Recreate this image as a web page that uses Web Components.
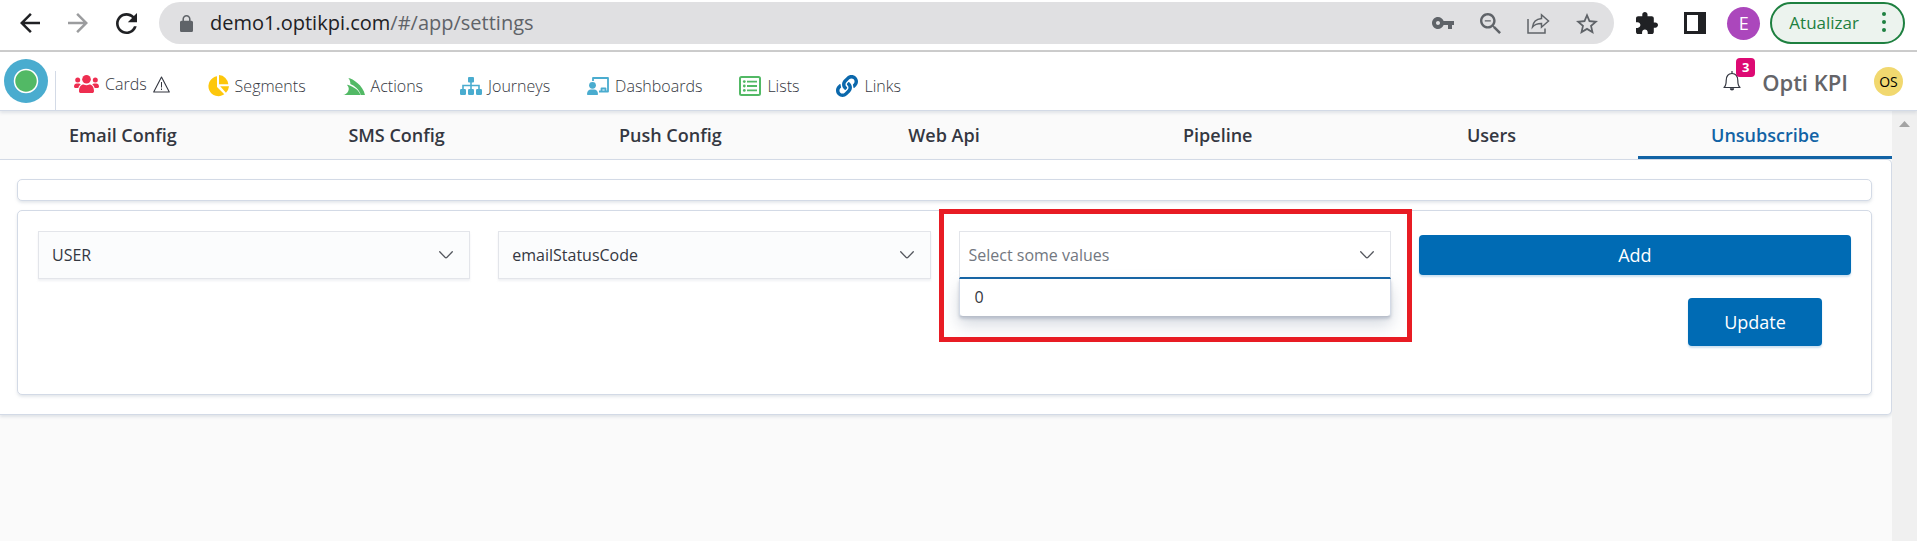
<!DOCTYPE html>
<html lang="en">
<head>
<meta charset="utf-8">
<title>Settings - Unsubscribe</title>
<style>
  body { margin: 0; background: #fafafa; color: #343741; font-family: "Open Sans", "Noto Sans", sans-serif; font-size: 16px; }
</style>
</head>
<body>
<settings-page></settings-page>
<script>
const ICONS = {
  back: [20, 20, '4 4 16 16', '<path d="M20 11H7.83l5.59-5.59L12 4l-8 8 8 8 1.41-1.41L7.83 13H20v-2z"/>'],
  forward: [20, 20, '4 4 16 16', '<path d="M12 4l-1.41 1.41L16.17 11H4v2h12.17l-5.58 5.59L12 20l8-8z"/>'],
  reload: [21, 21, '4 4 16 16', '<path d="M17.65 6.35C16.2 4.9 14.21 4 12 4c-4.42 0-7.99 3.58-7.99 8s3.57 8 7.99 8c3.73 0 6.84-2.55 7.73-6h-2.08c-.82 2.33-3.04 4-5.65 4-3.31 0-6-2.69-6-6s2.69-6 6-6c1.66 0 3.14.69 4.22 1.78L13 11h7V4l-2.35 2.35z"/>'],
  lock: [13, 17, '4 1 16 21', '<path d="M18 8h-1V6c0-2.76-2.24-5-5-5S7 3.24 7 6v2H6c-1.1 0-2 .9-2 2v10c0 1.1.9 2 2 2h12c1.1 0 2-.9 2-2V10c0-1.1-.9-2-2-2zM15.1 8H8.9V6c0-1.71 1.39-3.1 3.1-3.1s3.1 1.39 3.1 3.1v2z"/>'],
  key: [22, 12, '1 6 22 12', '<path d="M12.65 10C11.83 7.67 9.61 6 7 6c-3.31 0-6 2.69-6 6s2.69 6 6 6c2.61 0 4.83-1.67 5.65-4H17v4h4v-4h2v-4H12.65zM7 14c-1.1 0-2-.9-2-2s.9-2 2-2 2 .9 2 2-.9 2-2 2z"/>'],
  zoomout: [21, 21, '3 3 17.5 17.5', '<path d="M15.5 14h-.79l-.28-.27C15.41 12.59 16 11.11 16 9.5 16 5.91 13.09 3 9.5 3S3 5.91 3 9.5 5.91 16 9.5 16c1.61 0 3.09-.59 4.23-1.57l.27.28v.79l5 4.99L20.49 19l-4.99-5zm-6 0C7.01 14 5 11.99 5 9.5S7.01 5 9.5 5 14 7.01 14 9.5 11.99 14 9.5 14zM7 9h5v1H7z"/>'],
  share: [23, 21, '0 0 23 21', '<g fill="none" stroke="currentColor" stroke-width="1.5" stroke-linejoin="miter"><path d="M1 6v14H18v-4.500"/><path d="M14.500 1.800 21.500 8l-7 6.200v-3.700c-4.500 0-7 1-9 3.500 .5-4.500 3.500-7.900 9-8.500z"/></g>'],
  star: [22, 21, '2 2 20 19', '<path d="M22 9.240l-7.190-.62L12 2 9.190 8.630 2 9.240l5.460 4.730L5.820 21 12 17.270 18.180 21l-1.630-7.030L22 9.240zM12 15.400l-3.760 2.270 1-4.280-3.320-2.880 4.380-.38L12 6.100l1.710 4.040 4.380.38-3.320 2.880 1 4.280L12 15.400z"/>'],
  puzzle: [22, 22, '2 1 21 21', '<path d="M20.5 11H19V7c0-1.100-.9-2-2-2h-4V3.500C13 2.120 11.880 1 10.500 1S8 2.120 8 3.500V5H4c-1.100 0-1.990.9-1.990 2v3.800H3.500c1.490 0 2.700 1.210 2.700 2.700s-1.210 2.700-2.700 2.700H2V20c0 1.100.9 2 2 2h3.800v-1.500c0-1.490 1.210-2.700 2.700-2.700 1.490 0 2.700 1.210 2.700 2.700V22H17c1.100 0 2-.9 2-2v-4h1.500c1.380 0 2.500-1.120 2.500-2.500S21.880 11 20.500 11z"/>'],
  sidepanel: [22, 22, '0 0 22 22', '<path fill-rule="evenodd" d="M0 0h22v22H0zM3 3v16h11V3z"/>'],
  dots: [4, 20, '0 0 4 20', '<circle cx="2" cy="2" r="2"/><circle cx="2" cy="10" r="2"/><circle cx="2" cy="18" r="2"/>'],
  logo: [44, 44, '0 0 44 44', '<circle cx="22" cy="22" r="22" fill="#4aaccf"/><circle cx="22" cy="22" r="11.500" fill="#52b965" stroke="#fff" stroke-width="1.500"/>'],
  users: [25, 18, '0 0 25 18', '<circle cx="12.500" cy="4.300" r="4.300"/><circle cx="3.700" cy="5" r="2.500"/><circle cx="21.300" cy="5" r="2.500"/><path d="M5 16.200c0-4 2-6.600 4.600-6.600 2 .8 3.800.8 5.800 0 2.600 0 4.600 2.600 4.600 6.600 0 1-.8 1.800-1.800 1.800H6.800C5.800 18 5 17.200 5 16.200zM0 11.600C0 9.700 1.200 8.600 2.700 8.600h2c.8 0 1.500.3 2 .8-1.300.9-2 2-2.400 3.500H1.200C.5 12.900 0 12.300 0 11.600zM25 11.600c0-1.900-1.200-3-2.700-3h-2c-.8 0-1.500.3-2 .8 1.300.9 2 2 2.400 3.500h3.100c.7 0 1.200-.6 1.200-1.300z"/>'],
  warning: [17, 17, '0 0 17 17', '<path d="M8.500 1 16.300 16H.7z" fill="none" stroke="currentColor" stroke-width="1.100" stroke-linejoin="round"/><path d="M8 6h1v5.500H8zM8 12.500h1v1.400H8z"/>'],
  pie: [22, 22, '0 0 22 22', '<path d="M10 1.300V12l7.300 7.300A10 10 0 1 1 10 1.300z"/><path d="M12 0a10 10 0 0 1 9.300 9.300H12z"/><path d="M13.200 11.300H22a10 10 0 0 1-3.100 6.500z"/>'],
  actions: [22, 17, '0 64 496 384', '<path d="M88 216c81.700 10.200 273.700 102.300 304 232H0c99.500-8.100 184.500-137 88-232zm32-152c32.300 35.600 47.700 83.900 46.400 133.600C249.300 231.300 373.700 321.300 400 448h96C455.300 231.900 222.800 79.500 120 64z"/>'],
  sitemap: [22, 18, '0 0 22 18', '<rect x="8" width="6" height="5.500" rx="1"/><rect y="12" width="6" height="6" rx="1.200"/><rect x="8" y="12" width="6" height="6" rx="1.200"/><rect x="16" y="12" width="6" height="6" rx="1.200"/><path d="M3 12V8.500h16V12M11 5v7" fill="none" stroke="currentColor" stroke-width="1.600"/>'],
  board: [22, 18, '0 0 22 18', '<circle cx="5.500" cy="8.300" r="3.400"/><path d="M0 17.200c0-2.800 1.600-4.600 4-4.600h3c2.400 0 4 1.800 4 4.600 0 .5-.3.8-.8.8H.8c-.5 0-.8-.3-.8-.8z"/><path d="M6 4V1h15v13.500h-9M14.500 14v-2.500h4V14" fill="none" stroke="currentColor" stroke-width="1.800" stroke-linejoin="round"/>'],
  list: [22, 20, '0 0 22 20', '<rect x="1" y="1" width="20" height="18" rx="1.500" fill="none" stroke="currentColor" stroke-width="2"/><path d="M8 4.700h10v1.800H8zM8 9.100h10v1.800H8zM8 13.500h10v1.800H8z"/><circle cx="5.300" cy="5.600" r="1.400"/><circle cx="5.300" cy="10" r="1.400"/><circle cx="5.300" cy="14.400" r="1.400"/>'],
  link: [22, 22, '0 0 512 512', '<path d="M326.612 185.391c59.747 59.809 58.927 155.698.36 214.590-.11.12-.24.25-.36.37l-67.200 67.200c-59.270 59.270-155.699 59.262-214.960 0-59.270-59.260-59.270-155.700 0-214.960l37.106-37.106c9.840-9.840 26.786-3.300 27.294 10.606.648 17.722 3.826 35.527 9.690 52.721 1.986 5.822.567 12.262-3.783 16.612l-13.087 13.087c-28.026 28.026-28.905 73.660-1.155 101.960 28.024 28.579 74.086 28.749 102.325.51l67.200-67.190c28.191-28.191 28.073-73.757 0-101.830-3.701-3.694-7.429-6.564-10.341-8.569a16.037 16.037 0 0 1-6.947-12.606c-.396-10.567 3.348-21.456 11.698-29.806l21.054-21.055c5.521-5.521 14.182-6.199 20.584-1.731a152.482 152.482 0 0 1 20.522 17.197zM467.547 44.449c-59.261-59.262-155.690-59.270-214.960 0l-67.200 67.200c-.12.12-.25.25-.36.37-58.566 58.892-59.387 154.781.36 214.590a152.454 152.454 0 0 0 20.521 17.196c6.402 4.468 15.064 3.789 20.584-1.731l21.054-21.055c8.350-8.350 12.094-19.239 11.698-29.806a16.037 16.037 0 0 0-6.947-12.606c-2.912-2.005-6.640-4.875-10.341-8.569-28.073-28.073-28.191-73.639 0-101.830l67.200-67.190c28.239-28.239 74.300-28.069 102.325.51 27.750 28.300 26.872 73.934-1.155 101.960l-13.087 13.087c-4.350 4.350-5.769 10.790-3.783 16.612 5.864 17.194 9.042 34.999 9.690 52.721.509 13.906 17.454 20.446 27.294 10.606l37.106-37.106c59.271-59.259 59.271-155.699.001-214.959z"/>'],
  bell: [18, 20, '0 0 18 20', '<path d="M1 16.500c1.800-1.600 2.200-3.500 2.200-7C3.200 5 5.300 2.500 9 2.500s5.800 2.500 5.800 7c0 3.500.4 5.400 2.200 7z" fill="none" stroke="currentColor" stroke-width="1.200" stroke-linejoin="round"/><path d="M8.400 0h1.200v2.500H8.400zM6.800 17.300h4.400a2.200 2.200 0 0 1-4.400 0z"/>'],
  chevron: [14, 8, '0 0 14 8', '<path d="M.7.7 6 6.300q1 1 2 0L13.300.7" fill="none" stroke="currentColor" stroke-width="1.300" stroke-linecap="round"/>'],
  scrollup: [11, 6, '0 0 11 6', '<path d="M5.500 0 11 6H0z"/>']
};

function define(name, markup, setup) {
  const template = document.createElement('template');
  template.innerHTML = markup;
  customElements.define(name, class extends HTMLElement {
    connectedCallback() {
      if (this.shadowRoot) return;
      this.attachShadow({ mode: 'open' }).append(template.content.cloneNode(true));
      if (setup) setup(this, this.shadowRoot);
    }
  });
}

define('ui-icon', `<style>:host{display:block;flex:none} svg{display:block;fill:currentColor}</style>`, (el, root) => {
  const [w, h, box, body] = ICONS[el.getAttribute('name')];
  root.innerHTML += `<svg width="${w}" height="${h}" viewBox="${box}" preserveAspectRatio="none" aria-hidden="true">${body}</svg>`;
});

define('icon-button', `<style>
  :host{display:block;flex:none}
  button{display:flex;align-items:center;justify-content:center;border:0;padding:0;background:none;color:inherit;font:inherit}
</style><button type="button"><slot></slot></button>`, (el, root) => {
  root.querySelector('button').setAttribute('aria-label', el.getAttribute('label'));
});

define('browser-bar', `<style>
  :host{display:flex;align-items:center;height:46px;padding:0 12px 4px 20px;border-bottom:2px solid #ccc;background:#fff;color:#202124}
  .nav{display:flex;align-items:center;gap:28px;margin-right:22px}
  .off{color:#9b9c9e}
  .omnibox{flex:1;display:flex;align-items:center;height:42px;box-sizing:border-box;padding:0 16px 0 21px;border-radius:21px;background:#e0e0e2;color:#5f6368}
  .url{flex:1;margin-left:17px;font-size:20px;line-height:24px;white-space:nowrap}
  .url b{font-weight:400;color:#202124}
  .tools{display:flex;align-items:center;gap:26px}
  .ext{display:flex;align-items:center;gap:26px;margin:0 21px 0 22px}
  .right{display:flex;align-items:center}
  .who{width:33px;height:33px;border-radius:50%;background:#ab47bc;color:#fff;font-size:18px;display:flex;align-items:center;justify-content:center;margin-right:10px}
  .update{display:flex;align-items:center;gap:23px;box-sizing:border-box;height:42px;padding:0 17px 2px;border:2px solid #1e8040;border-radius:21px;background:#ecf3ee;color:#1e8040;font:17px "Open Sans",sans-serif}
</style>
<div class="nav">
  <icon-button label="Back"><ui-icon name="back"></ui-icon></icon-button>
  <icon-button label="Forward" class="off"><ui-icon name="forward"></ui-icon></icon-button>
  <icon-button label="Reload"><ui-icon name="reload"></ui-icon></icon-button>
</div>
<div class="omnibox">
  <ui-icon name="lock"></ui-icon>
  <span class="url"><b>demo1.optikpi.com</b>/#/app/settings</span>
  <div class="tools">
    <icon-button label="Passwords"><ui-icon name="key"></ui-icon></icon-button>
    <icon-button label="Zoom"><ui-icon name="zoomout"></ui-icon></icon-button>
    <icon-button label="Share"><ui-icon name="share"></ui-icon></icon-button>
    <icon-button label="Bookmark"><ui-icon name="star"></ui-icon></icon-button>
  </div>
</div>
<div class="ext">
  <icon-button label="Extensions"><ui-icon name="puzzle"></ui-icon></icon-button>
  <icon-button label="Side panel"><ui-icon name="sidepanel"></ui-icon></icon-button>
</div>
<div class="right">
  <div class="who">E</div>
  <button class="update" type="button">Atualizar<ui-icon name="dots"></ui-icon></button>
</div>`);

define('nav-item', `<style>
  :host{display:block;flex:none}
  a{display:flex;align-items:center;gap:6px;color:#343741;text-decoration:none;font-size:16px;line-height:24px;font-weight:300;white-space:nowrap}
  a > ui-icon{color:var(--tint)}
</style><a href="#/app"><slot></slot></a>`, (el, root) => {
  const icon = document.createElement('ui-icon');
  icon.setAttribute('name', el.getAttribute('icon'));
  root.querySelector('a').prepend(icon);
});

define('app-header', `<style>
  :host{display:flex;align-items:center;height:58px;padding:0 14px 0 4px;background:#fff;border-bottom:1px solid #d3dae6;box-shadow:0 2px 3px #98a2b340;position:relative}
  .rule{align-self:flex-end;width:1px;height:39px;margin:0 18px 0 7px;background:#d3dae6}
  nav{flex:1;display:flex;align-items:center;gap:37px;padding-top:10px}
  nav > :first-child{margin-bottom:4px}
  .bell{position:relative;margin-right:21px;color:#343741}
  .badge{position:absolute;left:13px;top:-13px;width:19px;height:19px;border-radius:4px;background:#dd0a73;color:#fff;font-size:13px;line-height:19px;font-weight:700;text-align:center}
  .name{font-size:22px;line-height:30px;font-weight:600;color:#646469;margin:2px 26px 0 0;white-space:nowrap}
  .who{width:29px;height:29px;border-radius:50%;background:#f1d86f;color:#000;font-size:14px;line-height:29px;text-align:center}
</style>
<ui-icon name="logo"></ui-icon>
<span class="rule"></span>
<nav>
  <nav-item icon="users" style="--tint:#ee2e50">Cards <ui-icon name="warning"></ui-icon></nav-item>
  <nav-item icon="pie" style="--tint:#fdc70c">Segments</nav-item>
  <nav-item icon="actions" style="--tint:#52b965">Actions</nav-item>
  <nav-item icon="sitemap" style="--tint:#4aaccf">Journeys</nav-item>
  <nav-item icon="board" style="--tint:#4aaccf">Dashboards</nav-item>
  <nav-item icon="list" style="--tint:#52b965">Lists</nav-item>
  <nav-item icon="link" style="--tint:#0b68ac">Links</nav-item>
</nav>
<div class="bell"><icon-button label="Notifications"><ui-icon name="bell"></ui-icon></icon-button><span class="badge">3</span></div>
<div class="name">Opti KPI</div>
<div class="who">OS</div>`);

define('tab-item', `<style>
  :host{display:block;flex:1 1 0}
  button{display:block;width:100%;height:48px;border:0;border-bottom:3px solid transparent;padding:2px 0 0;background:none;color:#343741;font:600 18px/24px "Open Sans",sans-serif}
  :host([selected]) button{color:#1263a5;border-bottom-color:#1263a5}
</style><button type="button" role="tab"><slot></slot></button>`, (el, root) => {
  root.querySelector('button').setAttribute('aria-selected', el.hasAttribute('selected'));
});

define('tab-bar', `<style>
  :host{display:flex;gap:20px;margin-left:-4px;background:#fafafa}
</style><slot></slot>`);

define('panel-card', `<style>
  :host{display:block;box-sizing:border-box;border:1px solid #d3dae6;border-radius:5px;background:#fff;box-shadow:0 2px 3px #98a2b340}
</style><slot></slot>`);

define('select-field', `<style>
  :host{display:grid;align-items:center;height:48px}
  select,ui-icon{grid-area:1/1}
  select{appearance:none;width:100%;height:48px;box-sizing:border-box;margin:0;border:1px solid #e3e5ea;border-radius:0;padding:0 40px 0 13px;background:#fbfcfd;color:#343741;font:16px "Open Sans",sans-serif;box-shadow:0 2px 2px #98a2b326}
  ui-icon{justify-self:end;margin-right:17px;color:#55585f;pointer-events:none}
</style><select></select><ui-icon name="chevron"></ui-icon>`, (el, root) => {
  const select = root.querySelector('select');
  select.setAttribute('aria-label', el.getAttribute('label'));
  select.add(new Option(el.getAttribute('value')));
});

define('combo-field', `<style>
  :host{display:grid;align-items:center;height:48px;position:relative}
  input,ui-icon{grid-area:1/1}
  input{width:100%;height:48px;box-sizing:border-box;margin:0;border:1px solid #e3e5ea;border-bottom:2px solid #1263a5;border-radius:0;padding:0 40px 0 9px;background:#fff;color:#343741;font:16px "Open Sans",sans-serif;outline:0}
  input::placeholder{color:#727780;opacity:1}
  ui-icon{justify-self:end;margin-right:17px;color:#55585f;pointer-events:none}
  ul{position:absolute;top:48px;left:0;right:0;box-sizing:border-box;margin:0;padding:0;list-style:none;border:1px solid #d3dae6;border-top:0;border-bottom-color:#b9bfca;border-radius:0 0 4px 4px;background:#fff;box-shadow:0 2px 3px #98a2b380,0 8px 16px #98a2b366}
  li{padding:0 15px;font-size:16px;line-height:37px}
  .frame{position:absolute;inset:-22px -21px -63px -20px;border:5px solid #e81c24;pointer-events:none}
</style>
<input type="text" role="combobox" aria-expanded="true" aria-label="Values" placeholder="Select some values">
<ui-icon name="chevron"></ui-icon>
<ul role="listbox"><li role="option">0</li></ul>
<span class="frame"></span>`);

define('fill-button', `<style>
  :host{display:block}
  button{display:block;width:100%;height:var(--h,40px);border:0;border-radius:4px;padding:0;background:#006bb4;color:#fff;font:18px "Open Sans",sans-serif;box-shadow:0 2px 2px #006bb433}
</style><button type="button"><slot></slot></button>`);

define('unsubscribe-form', `<style>
  :host{display:block;padding:20px 20px 48px}
  .row{display:grid;grid-template-columns:repeat(4,minmax(0,1fr));gap:28px;align-items:center}
  .foot{display:flex;justify-content:flex-end;padding:19px 29px 0 0}
  .foot fill-button{width:134px;--h:48px}
</style>
<div class="row">
  <select-field label="Entity" value="USER"></select-field>
  <select-field label="Attribute" value="emailStatusCode"></select-field>
  <combo-field></combo-field>
  <fill-button>Add</fill-button>
</div>
<div class="foot"><fill-button>Update</fill-button></div>`);

define('settings-page', `<style>
  :host{display:flex;flex-direction:column;min-height:100vh}
  .body{flex:1;display:flex}
  main{flex:1;min-width:0;overflow:hidden}
  .panel{border:1px solid #d3dae6;border-left:0;border-radius:0 5px 5px 0;background:#fff;box-shadow:0 2px 3px #98a2b340;padding:19px 19px 19px 17px;display:grid;gap:9px}
  .blank{height:22px}
  .scroll{flex:none;width:25px;background:#f0f0f0;display:flex;justify-content:center;align-items:flex-start;color:#a3a3a3}
  .scroll ui-icon{margin-top:10px}
</style>
<browser-bar></browser-bar>
<app-header></app-header>
<div class="body">
  <main>
    <tab-bar role="tablist">
      <tab-item>Email Config</tab-item><tab-item>SMS Config</tab-item><tab-item>Push Config</tab-item><tab-item>Web Api</tab-item><tab-item>Pipeline</tab-item><tab-item>Users</tab-item><tab-item selected>Unsubscribe</tab-item>
    </tab-bar>
    <div class="panel">
      <panel-card class="blank"></panel-card>
      <panel-card><unsubscribe-form></unsubscribe-form></panel-card>
    </div>
  </main>
  <div class="scroll"><ui-icon name="scrollup"></ui-icon></div>
</div>`);
</script>
</body>
</html>
